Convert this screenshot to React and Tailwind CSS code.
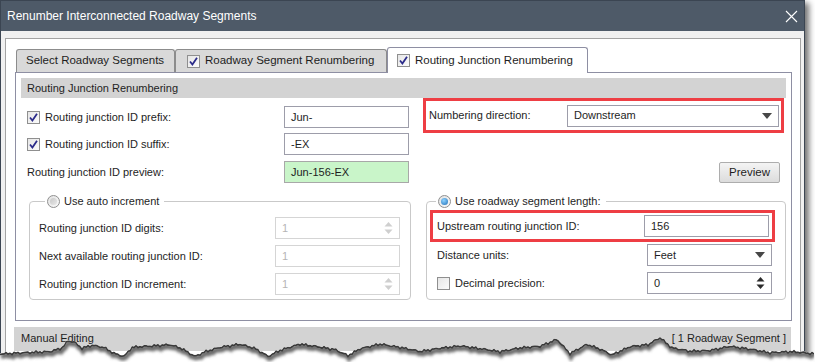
import React from "react";

const Check = ({ checked }) => (
  <span className="w-[13px] h-[13px] shrink-0 border border-[#8f8f8f] bg-gradient-to-br from-[#e6e6e6] to-[#fbfbfb] flex items-center justify-center">
    {checked && (
      <svg width="9" height="9" viewBox="0 0 9 9">
        <path d="M1 4.5 L3.4 7.5 L8 0.8" fill="none" stroke="#2b2b8a" strokeWidth="1.8" />
      </svg>
    )}
  </span>
);

const Radio = ({ on }) => (
  <span className="w-[13px] h-[13px] shrink-0 rounded-full border border-[#8f8f8f] bg-gradient-to-br from-[#e2e2e2] to-[#fafafa] flex items-center justify-center">
    {on ? (
      <span className="w-[7px] h-[7px] rounded-full bg-[radial-gradient(circle_at_40%_35%,#8fd3ff,#1f6fb8)]" />
    ) : (
      <span className="w-[7px] h-[7px] rounded-full bg-gradient-to-br from-[#c8c8c8] to-[#e8e8e8]" />
    )}
  </span>
);

const Arrow = ({ color = "#474747" }) => (
  <svg width="10" height="6" viewBox="0 0 10 6">
    <path d="M0 0 H10 L5 6 Z" fill={color} />
  </svg>
);

const Spin = ({ color }) => (
  <svg width="9" height="14" viewBox="0 0 9 14">
    <path d="M0.5 5.5 L4.5 1 L8.5 5.5 Z" fill={color} />
    <path d="M0.5 8.5 H8.5 L4.5 13 Z" fill={color} />
  </svg>
);

const Field = ({ value, green, disabled, arrow, spin, className = "" }) => (
  <div
    className={`h-[22px] flex items-center pl-[6px] pr-[6px] border ${
      disabled ? "border-[#d5d5d5] text-[#b5b5b5]" : "border-[#9d9daa] text-[#1e1e1e]"
    } ${green ? "bg-[#c9f5c9]" : "bg-white"} ${className}`}
  >
    <span className="flex-1">{value}</span>
    {arrow && <Arrow />}
    {spin && <Spin color={disabled ? "#cfcfcf" : "#2a2a2a"} />}
  </div>
);

const Tab = ({ label, check, active, w, pl }) => (
  <div
    className={`flex items-center gap-[5px] border border-b-0 rounded-t-[3px] text-[11.5px] ${w} ${pl} ${
      active
        ? "h-[26px] bg-white border-[#8e8fa3] relative z-10 -mb-px"
        : "h-[23px] bg-[#d9d9d9] border-[#8c8c8c]"
    }`}
  >
    {check && <Check checked />}
    <span>{label}</span>
  </div>
);

// tear line of the cropped screenshot, page coordinates
const tearBase = [
  [0, 353], [25, 352], [50, 351], [62, 347], [68, 340], [74, 341], [82, 347], [92, 344],
  [104, 346], [114, 352], [124, 355], [132, 346], [150, 345], [170, 344], [182, 348],
  [195, 356], [205, 351], [222, 346], [240, 343], [255, 347], [268, 355], [280, 349],
  [300, 343], [318, 346], [335, 349], [348, 355], [360, 348], [380, 343], [400, 346],
  [420, 350], [440, 347], [460, 345], [480, 348], [500, 351], [520, 347], [540, 345],
  [557, 338], [570, 352], [587, 343], [600, 348], [612, 354], [630, 346], [648, 344],
  [660, 337], [672, 347], [690, 350], [710, 349], [730, 345], [750, 348], [770, 352],
  [790, 351], [815, 353],
];

const TOP = 332;

const tearY = (x) => {
  let i = 0;
  while (i < tearBase.length - 2 && tearBase[i + 1][0] < x) i++;
  const [x0, y0] = tearBase[i];
  const [x1, y1] = tearBase[i + 1];
  const t = (x - x0) / (x1 - x0);
  const n = Math.sin(x * 1.7) * 0.8 + Math.sin(x * 0.63 + 1) * 0.6 + Math.sin(x * 3.1) * 0.4;
  return y0 + (y1 - y0) * t + n - TOP;
};

const tearPts = [];
for (let x = 0; x <= 815; x += 2) tearPts.push(`${x},${tearY(x).toFixed(1)}`);
const tearLine = "M" + tearPts.join(" L");
const tearArea = tearLine + " L815,40 L0,40 Z";

const TornEdge = () => (
  <svg className="absolute left-0 bottom-0" width="815" height="30" viewBox="0 0 815 30">
    <defs>
      <clipPath id="below">
        <path d={tearArea} />
      </clipPath>
      <filter id="blur" x="-5%" y="-50%" width="110%" height="200%">
        <feGaussianBlur stdDeviation="1.6" />
      </filter>
    </defs>
    <path d={tearArea} fill="#ffffff" />
    <g clipPath="url(#below)">
      <path d={tearLine} transform="translate(1,3)" fill="none" stroke="#6a6a6a" strokeWidth="5" filter="url(#blur)" />
      <path d={tearLine} transform="translate(0,1)" fill="none" stroke="#3a3a3a" strokeWidth="1.6" />
    </g>
  </svg>
);

export default function App() {
  return (
    <div className="w-[815px] h-[362px] bg-white relative overflow-hidden font-['Liberation_Sans',Arial,sans-serif] text-[11px] text-[#1e1e1e] leading-none">
      <div className="w-[805px] h-[380px] border border-[#3b4552] bg-[#f0f0f0] shadow-[4px_3px_6px_rgba(0,0,0,0.55)]">
        {/* Title bar */}
        <div className="h-[30px] bg-[#4e5a68] flex items-center justify-between pl-[6px] pr-[6px] text-white text-[12px]">
          <span>Renumber Interconnected Roadway Segments</span>
          <svg width="13" height="13" viewBox="0 0 13 13">
            <path d="M1 1 L12 12 M12 1 L1 12" stroke="#ffffff" strokeWidth="1.1" />
          </svg>
        </div>

        {/* Body */}
        <div className="pl-[4px] pr-[3px] pt-[7px]">
          <div className="border border-[#a3a3a3] bg-white pl-[9px] pt-[8px] h-[340px]">
            {/* Tabs */}
            <div className="flex items-end h-[25px] pl-px">
              <Tab label="Select Roadway Segments" w="w-[159px]" pl="pl-[9px]" />
              <Tab label="Roadway Segment Renumbering" check w="w-[212px]" pl="pl-[11px]" />
              <Tab label="Routing Junction Renumbering" check active w="w-[201px]" pl="pl-[9px]" />
            </div>

            {/* Content panel */}
            <div className="w-[777px] h-[249px] border border-[#8e8fa3] px-[5px] pt-[5px]">
              <div className="h-[20px] bg-[#d3d3d3] flex items-center pl-[6px]">Routing Junction Renumbering</div>

              <div className="flex">
                {/* Left column */}
                <div className="w-[392px] pl-[6px] pr-[4px] pt-[8px]">
                  <div className="h-[22px] flex items-center">
                    <Check checked />
                    <span className="ml-[5px]">Routing junction ID prefix:</span>
                    <Field value="Jun-" className="ml-auto w-[125px]" />
                  </div>
                  <div className="h-[22px] flex items-center mt-[5px]">
                    <Check checked />
                    <span className="ml-[5px]">Routing junction ID suffix:</span>
                    <Field value="-EX" className="ml-auto w-[125px]" />
                  </div>
                  <div className="h-[22px] flex items-center mt-[6px]">
                    <span>Routing junction ID preview:</span>
                    <Field value="Jun-156-EX" green className="ml-auto w-[125px] !border-[#a8a8a8]" />
                  </div>
                </div>

                {/* Right column */}
                <div className="flex-1 pl-[10px]">
                  <div className="w-[361px] h-[35px] border-[3px] border-[#ee3e44] flex items-center pl-[3px] pr-[2px]">
                    <span>Numbering direction:</span>
                    <Field value="Downstream" arrow className="ml-auto w-[212px]" />
                  </div>
                  <div className="flex justify-end pr-[6px] mt-[29px]">
                    <button className="w-[61px] h-[21px] border border-[#adadad] rounded-[2px] bg-gradient-to-b from-[#f4f4f4] to-[#dcdcdc] text-[11.5px]">
                      Preview
                    </button>
                  </div>
                </div>
              </div>

              {/* Group boxes */}
              <div className="flex mt-[10px]">
                <fieldset className="ml-[8px] w-[386px] h-[107px] border border-[#c9c9c9] rounded-[4px] pl-[9px] pr-[10px]">
                  <legend className="ml-[6px] px-[2px] flex items-center gap-[4px] h-[16px]">
                    <Radio />
                    <span className="pr-[3px]">Use auto increment</span>
                  </legend>
                  <div className="h-[22px] flex items-center mt-[8px]">
                    <span>Routing junction ID digits:</span>
                    <Field value="1" disabled spin className="ml-auto w-[125px]" />
                  </div>
                  <div className="h-[22px] flex items-center mt-[6px]">
                    <span>Next available routing junction ID:</span>
                    <Field value="1" disabled className="ml-auto w-[125px]" />
                  </div>
                  <div className="h-[22px] flex items-center mt-[6px]">
                    <span>Routing junction ID increment:</span>
                    <Field value="1" disabled spin className="ml-auto w-[125px]" />
                  </div>
                </fieldset>

                <fieldset className="ml-[15px] w-[354px] h-[107px] border border-[#c9c9c9] rounded-[4px] pl-[3px] pr-[10px]">
                  <legend className="ml-[6px] px-[2px] flex items-center gap-[4px] h-[16px]">
                    <Radio on />
                    <span className="pr-[3px]">Use roadway segment length:</span>
                  </legend>
                  <div className="w-[345px] h-[32px] border-[3px] border-[#ee3e44] flex items-center pl-[4px] pr-[3px] mt-[1px]">
                    <span>Upstream routing junction ID:</span>
                    <Field value="156" className="ml-auto w-[125px]" />
                  </div>
                  <div className="pl-[7px] pr-[3px]">
                    <div className="h-[22px] flex items-center mt-[2px]">
                      <span>Distance units:</span>
                      <Field value="Feet" arrow className="ml-auto w-[125px]" />
                    </div>
                    <div className="h-[22px] flex items-center mt-[6px]">
                      <Check />
                      <span className="ml-[5px]">Decimal precision:</span>
                      <Field value="0" spin className="ml-auto w-[125px]" />
                    </div>
                  </div>
                </fieldset>
              </div>
            </div>

            {/* Manual editing bar */}
            <div className="-ml-px mt-[6px] w-[777px] h-[24px] bg-[#d3d3d3] flex justify-between pl-[7px] pr-[5px] pt-[6px]">
              <span>Manual Editing</span>
              <span>[ 1 Roadway Segment ]</span>
            </div>
          </div>
        </div>
      </div>
      <TornEdge />
    </div>
  );
}
